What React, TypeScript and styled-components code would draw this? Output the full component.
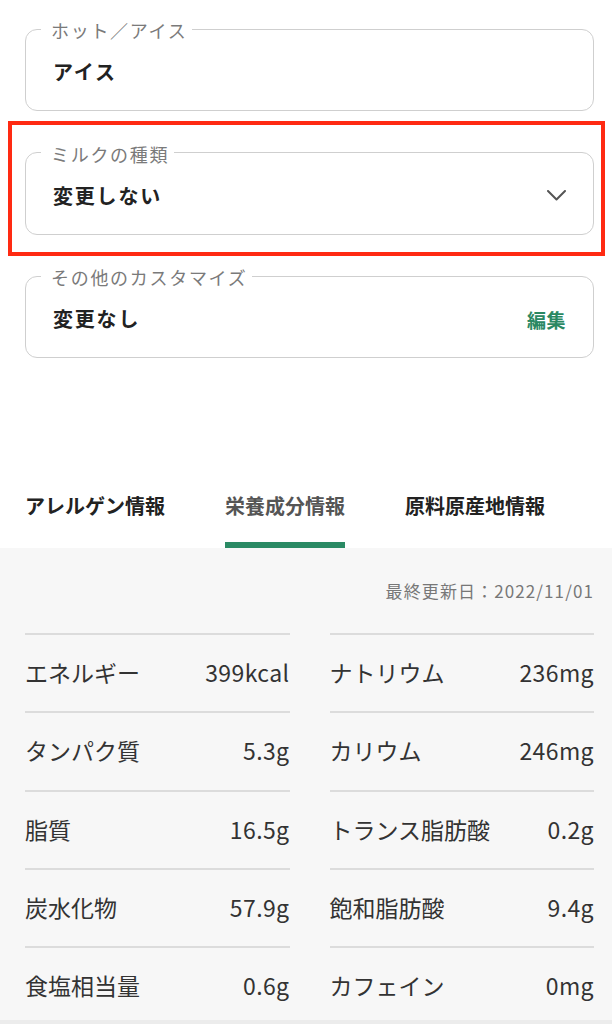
import React from "react";
import styled, { createGlobalStyle } from "styled-components";

const GlobalStyle = createGlobalStyle`
  html, body {
    margin: 0;
    padding: 0;
    background: #ffffff;
  }
  body {
    font-family: "Noto Sans CJK JP", "Noto Sans", sans-serif;
    color: #222;
    -webkit-font-smoothing: antialiased;
  }
  * { box-sizing: border-box; }
`;

const Page = styled.div`
  width: 612px;
  min-height: 1024px;
  display: flex;
  flex-direction: column;
`;

const Form = styled.div`
  display: flex;
  flex-direction: column;
  gap: 31.5px;
  padding: 19px 18px 0 25px;
`;

const Field = styled.fieldset`
  margin: 0;
  min-width: 0;
  border: 1.5px solid #cfcfcf;
  border-radius: 12px;
  padding: 19px 27px 24px 27px;
`;

const Legend = styled.legend`
  margin-left: -12px;
  padding: 2px 5px 0 10px;
  font-size: 18px;
  line-height: 18px;
  letter-spacing: 1.7px;
  color: #7a7a7a;
`;

const FieldRow = styled.div`
  display: flex;
  align-items: center;
  justify-content: space-between;
  height: 28px;
`;

const Value = styled.span`
  font-size: 20px;
  line-height: 28px;
  font-weight: 700;
  letter-spacing: 1.8px;
  color: #222;
`;

const EditLink = styled.button`
  border: 0;
  background: none;
  padding: 0;
  font-family: inherit;
  font-size: 19px;
  font-weight: 700;
  letter-spacing: 0.5px;
  color: #2a8862;
  cursor: pointer;
`;

const Highlight = styled.div`
  position: relative;
  &::after {
    content: "";
    position: absolute;
    left: -17px;
    right: -11px;
    top: -22px;
    bottom: -21px;
    border: 4.5px solid #ff2a12;
    pointer-events: none;
  }
`;

const Chevron = styled.svg`
  width: 19px;
  height: 11px;
`;

const Tabs = styled.nav`
  display: flex;
  gap: 60px;
  margin-top: 134px;
  padding: 0 18px 0 25px;
`;

const Tab = styled.div<{ $active?: boolean }>`
  font-size: 20px;
  line-height: 28px;
  font-weight: 700;
  color: ${(p) => (p.$active ? "#555555" : "#222222")};
  padding-bottom: 22px;
  border-bottom: 6px solid ${(p) => (p.$active ? "#2a8a64" : "transparent")};
`;

const Panel = styled.section`
  flex: 1;
  background: #f7f7f7;
  padding: 30px 18px 0 25px;
`;

const Updated = styled.div`
  text-align: right;
  font-size: 17px;
  line-height: 26px;
  letter-spacing: 1.1px;
  color: #777;
  margin-bottom: 29px;
`;

const Grid = styled.div`
  display: grid;
  grid-template-columns: 1fr 1fr;
  column-gap: 40px;
`;

const Cell = styled.div`
  display: flex;
  align-items: center;
  justify-content: space-between;
  height: 78.3px;
  padding-bottom: 2px;
  border-top: 2px solid #dcdcdc;
  font-size: 23px;
  color: #333;
`;

const CellLabel = styled.span`
  letter-spacing: 0;
`;

const CellValue = styled.span`
  letter-spacing: 0.4px;
`;

const BottomEdge = styled.div`
  position: fixed;
  left: 0;
  right: 0;
  top: 1020px;
  height: 4px;
  background: #ececec;
`;

const nutrients: [string, string, string, string][] = [
  ["エネルギー", "399kcal", "ナトリウム", "236mg"],
  ["タンパク質", "5.3g", "カリウム", "246mg"],
  ["脂質", "16.5g", "トランス脂肪酸", "0.2g"],
  ["炭水化物", "57.9g", "飽和脂肪酸", "9.4g"],
  ["食塩相当量", "0.6g", "カフェイン", "0mg"],
];

export default function App() {
  return (
    <Page>
      <GlobalStyle />
      <Form>
        <Field>
          <Legend>ホット／アイス</Legend>
          <FieldRow>
            <Value>アイス</Value>
          </FieldRow>
        </Field>
        <Highlight>
          <Field>
            <Legend>ミルクの種類</Legend>
            <FieldRow>
              <Value>変更しない</Value>
              <Chevron viewBox="0 0 19 11" fill="none">
                <polyline
                  points="1,1 9.5,9.5 18,1"
                  stroke="#555"
                  strokeWidth="2"
                  strokeLinecap="round"
                  strokeLinejoin="round"
                />
              </Chevron>
            </FieldRow>
          </Field>
        </Highlight>
        <Field>
          <Legend>その他のカスタマイズ</Legend>
          <FieldRow>
            <Value>変更なし</Value>
            <EditLink>編集</EditLink>
          </FieldRow>
        </Field>
      </Form>
      <Tabs>
        <Tab>アレルゲン情報</Tab>
        <Tab $active>栄養成分情報</Tab>
        <Tab>原料原産地情報</Tab>
      </Tabs>
      <Panel>
        <Updated>最終更新日：2022/11/01</Updated>
        <Grid>
          {nutrients.map(([l1, v1, l2, v2]) => (
            <React.Fragment key={l1}>
              <Cell>
                <CellLabel>{l1}</CellLabel>
                <CellValue>{v1}</CellValue>
              </Cell>
              <Cell>
                <CellLabel>{l2}</CellLabel>
                <CellValue>{v2}</CellValue>
              </Cell>
            </React.Fragment>
          ))}
        </Grid>
      </Panel>
      <BottomEdge />
    </Page>
  );
}
